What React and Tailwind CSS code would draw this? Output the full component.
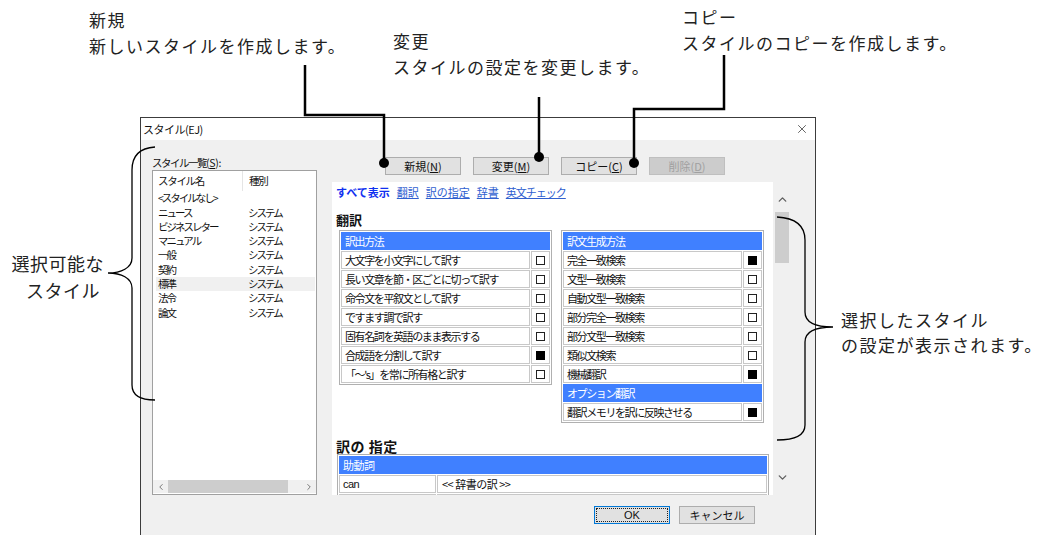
import React from 'react';
import { X, ChevronUp, ChevronDown, ChevronLeft, ChevronRight } from 'lucide-react';

const styles = [
    ['<スタイルなし>', ''],
    ['ニュース', 'システム'],
    ['ビジネスレター', 'システム'],
    ['マニュアル', 'システム'],
    ['一般', 'システム'],
    ['契約', 'システム'],
    ['標準', 'システム'],
    ['法令', 'システム'],
    ['論文', 'システム'],
];

const leftRows = [
    ['大文字を小文字にして訳す', false],
    ['長い文章を節・区ごとに切って訳す', false],
    ['命令文を平叙文として訳す', false],
    ['ですます調で訳す', false],
    ['固有名詞を英語のまま表示する', false],
    ['合成語を分割して訳す', true],
    ['「～\'s」を常に所有格と訳す', false],
];

const rightRows = [
    ['完全一致検索', true],
    ['文型一致検索', false],
    ['自動文型一致検索', false],
    ['部分完全一致検索', false],
    ['部分文型一致検索', false],
    ['類似文検索', false],
    ['機械翻訳', true],
];

const Check = ({ on }) =>
    on ? (
        <span className="inline-block w-[9px] h-[9px] bg-black" />
    ) : (
        <span className="inline-block w-[9px] h-[9px] border border-[#222] bg-white" />
    );

const HeaderRow = ({ label }) => (
    <tr>
        <td colSpan={2} className="p-0 border border-[#4080ff] bg-[#4080ff]">
            <div className="h-[16px] leading-[16px] pl-[3px] text-white">{label}</div>
        </td>
    </tr>
);

const CheckRow = ({ label, on }) => (
    <tr>
        <td className="p-0 border border-[#c8c8c8]">
            <div className="h-[16px] leading-[16px] pl-[3px] whitespace-nowrap">{label}</div>
        </td>
        <td className="p-0 w-[19px] border border-[#c8c8c8]">
            <div className="h-[16px] flex items-center justify-center">
                <Check on={on} />
            </div>
        </td>
    </tr>
);

const Btn = ({ children, disabled }) => (
    <div
        className={`w-[76px] h-[18px] border flex items-center justify-center text-[11px] ${disabled ? 'bg-[#cccccc] border-[#bfbfbf] text-[#a0a0a0]' : 'bg-[#e1e1e1] border-[#adadad] text-[#111]'
            }`}
    >
        {children}
    </div>
);

const App = () => {
    return (
        <div className="relative w-[1042px] h-[535px] overflow-hidden bg-white text-[#111] font-['Noto_Sans_CJK_JP','Noto_Sans',sans-serif]">
            {/* callout labels */}
            <div className="absolute left-[89px] top-[7px] whitespace-nowrap text-[17px] leading-[26px] tracking-[1.5px] text-[#222]">
                <p>新規</p>
                <p>新しいスタイルを作成します。</p>
            </div>
            <div className="absolute left-[393px] top-[28px] whitespace-nowrap text-[17px] leading-[26px] tracking-[1.5px] text-[#222]">
                <p>変更</p>
                <p>スタイルの設定を変更します。</p>
            </div>
            <div className="absolute left-[682px] top-[4px] whitespace-nowrap text-[17px] leading-[26px] tracking-[1.5px] text-[#222]">
                <p>コピー</p>
                <p>スタイルのコピーを作成します。</p>
            </div>
            <div className="absolute right-[938px] top-[250px] whitespace-nowrap text-[18px] leading-[27px] tracking-[0.5px] text-right text-[#222]">
                <p>選択可能な</p>
                <p className="pr-[4px]">スタイル</p>
            </div>
            <div className="absolute left-[841px] top-[307px] whitespace-nowrap text-[17px] leading-[25px] tracking-[1.5px] text-[#222]">
                <p>選択したスタイル</p>
                <p>の設定が表示されます。</p>
            </div>

            {/* dialog */}
            <div className="ml-[140px] mt-[117px] w-[676px] h-[430px] border border-[#3c3c3c] flex flex-col">
                <div className="h-[22px] bg-white flex items-center justify-between pl-[2px] pr-[6px]">
                    <span className="text-[11px] tracking-[-0.5px]">スタイル(EJ)</span>
                    <X size={14} strokeWidth={1.2} className="text-[#222]" />
                </div>
                <div className="flex-1 bg-[#f0f0f0] flex text-[11px]">
                    {/* style list */}
                    <div className="w-[177px] pl-[11px] pt-[15px] flex flex-col">
                        <div className="h-[15px] leading-[15px] text-[10.5px] whitespace-nowrap">
                            <span className="tracking-[-1.5px]">スタイル一覧</span>
                            <span className="tracking-[-0.3px]">(<span className="underline">S</span>):</span>
                        </div>
                        <div className="w-[165px] h-[325px] border border-[#a0a0a0] bg-white flex flex-col">
                            <div className="h-[20px] flex items-stretch text-[10.5px] tracking-[-1.3px]">
                                <div className="w-[90px] pl-[5px] flex items-center border-r border-[#e5e5e5]">スタイル名</div>
                                <div className="pl-[6px] flex items-center">種別</div>
                            </div>
                            {styles.map(([name, kind]) => (
                                <div
                                    key={name}
                                    className={`h-[14.3px] flex items-center text-[10.5px] tracking-[-2px] ${name === '標準' ? 'bg-[#f0f0f0] ml-[3px] mr-[1px]' : ''
                                        }`}
                                >
                                    <div className={`${name === '標準' ? 'w-[92px] pl-[2px]' : 'w-[95px] pl-[5px]'} whitespace-nowrap`}>{name}</div>
                                    <div>{kind}</div>
                                </div>
                            ))}
                            <div className="flex-1" />
                            <div className="h-[13px] mb-[1px] flex items-center bg-[#f0f0f0]">
                                <div className="w-[15px] flex justify-center text-[#606060]">
                                    <ChevronLeft size={10} strokeWidth={2} />
                                </div>
                                <div className="w-[120px] h-full bg-[#cdcdcd]" />
                                <div className="flex-1 flex justify-end pr-[2px] text-[#606060]">
                                    <ChevronRight size={10} strokeWidth={2} />
                                </div>
                            </div>
                        </div>
                    </div>

                    {/* right side */}
                    <div className="flex-1 flex flex-col">
                        <div className="mt-[17px] ml-[67px] flex gap-[12px]">
                            <Btn>新規(<span className="underline">N</span>)</Btn>
                            <Btn>変更(<span className="underline">M</span>)</Btn>
                            <Btn>コピー(<span className="underline">C</span>)</Btn>
                            <Btn disabled>削除(<span className="underline">D</span>)</Btn>
                        </div>
                        <div className="mt-[7px] flex">
                            <div className="ml-[14px] w-[441px] h-[313px] bg-white overflow-hidden flex flex-col">
                                <div className="pt-[2px] pl-[4px] h-[18px] flex items-center gap-[7px] text-[11px]">
                                    <span className="font-bold text-[#1030f0]">すべて表示</span>
                                    <span className="underline text-[#3060d0]">翻訳</span>
                                    <span className="underline text-[#3060d0]">訳の指定</span>
                                    <span className="underline text-[#3060d0]">辞書</span>
                                    <span className="underline text-[#3060d0] tracking-[-1px]">英文チェック</span>
                                </div>
                                <div className="mt-[5px] ml-[4px] mr-[3px] h-[2px] bg-[#d0d0d0]" />
                                <div className="mt-[7px] ml-[4px] h-[16px] leading-[16px] text-[13px] font-bold">翻訳</div>
                                <div className="mt-[2px] flex items-start text-[11px] tracking-[-1.4px]">
                                    <table className="ml-[7px] w-[213px] border border-[#b0b0b0] border-separate border-spacing-[1px]">
                                        <tbody>
                                            <HeaderRow label="訳出方法" />
                                            {leftRows.map(([l, on]) => (
                                                <CheckRow key={l} label={l} on={on} />
                                            ))}
                                        </tbody>
                                    </table>
                                    <table className="ml-[9px] w-[203px] border border-[#b0b0b0] border-separate border-spacing-[1px]">
                                        <tbody>
                                            <HeaderRow label="訳文生成方法" />
                                            {rightRows.map(([l, on]) => (
                                                <CheckRow key={l} label={l} on={on} />
                                            ))}
                                            <HeaderRow label="オプション翻訳" />
                                            <CheckRow label="翻訳メモリを訳に反映させる" on />
                                        </tbody>
                                    </table>
                                </div>
                                <div className="mt-[10px] ml-[4px] mr-[3px] h-[2px] bg-[#d0d0d0]" />
                                <div className="mt-[5px] ml-[4px] h-[16px] leading-[16px] text-[14px] font-bold tracking-[0.5px]">訳の 指定</div>
                                <table className="ml-[5px] w-[432px] border border-[#b0b0b0] border-separate border-spacing-[1px] text-[11px] tracking-[-0.5px]">
                                    <tbody>
                                        <HeaderRow label="助動詞" />
                                        <tr>
                                            <td className="p-0 w-[97px] border border-[#c8c8c8]">
                                                <div className="h-[16px] leading-[16px] pl-[3px] font-['Liberation_Sans',sans-serif]">can</div>
                                            </td>
                                            <td className="p-0 border border-[#c8c8c8]">
                                                <div className="h-[16px] leading-[16px] pl-[4px]">&lt;&lt; 辞書の訳 &gt;&gt;</div>
                                            </td>
                                        </tr>
                                        <tr>
                                            <td className="p-0 w-[97px] border border-[#c8c8c8]">
                                                <div className="h-[16px] leading-[16px] pl-[3px] font-['Liberation_Sans',sans-serif]">could</div>
                                            </td>
                                            <td className="p-0 border border-[#c8c8c8]">
                                                <div className="h-[16px] leading-[16px] pl-[4px]">&lt;&lt; 辞書の訳 &gt;&gt;</div>
                                            </td>
                                        </tr>
                                    </tbody>
                                </table>
                            </div>
                            <div className="ml-[2px] w-[14px] h-[313px] flex flex-col items-center text-[#606060]">
                                <ChevronUp size={13} strokeWidth={2.5} className="mt-[11px]" />
                                <div className="mt-[6px] w-[14px] h-[51px] bg-[#cdcdcd]" />
                                <div className="flex-1" />
                                <ChevronDown size={13} strokeWidth={2.5} className="mb-[11px]" />
                            </div>
                        </div>
                        <div className="mt-[11px] ml-[276px] flex gap-[9px]">
                            <div className="w-[76px] h-[18px] border border-[#0078d7] bg-[#e1e1e1] p-[1px]">
                                <div className="w-full h-full border border-dotted border-[#222] flex items-center justify-center text-[11px] font-['Liberation_Sans',sans-serif]">
                                    OK
                                </div>
                            </div>
                            <Btn>キャンセル</Btn>
                        </div>
                    </div>
                </div>
            </div>

            {/* callout lines and braces */}
            <svg className="absolute inset-0 pointer-events-none" width="1042" height="535" viewBox="0 0 1042 535">
                <g fill="none" stroke="#000" strokeWidth="2.5">
                    <path d="M305 65 V115 H384 V163" />
                    <path d="M539 97 V158" />
                    <path d="M724 55 V109 H634 V163" />
                </g>
                <g fill="#000">
                    <circle cx="384" cy="163" r="5" />
                    <circle cx="539" cy="157" r="5" />
                    <circle cx="634" cy="163" r="5" />
                </g>
                <g fill="none" stroke="#000" strokeWidth="1.3">
                    <path d="M155 147 C140 148 132 155 132 170 V258 C132 268 121 273 108 273 C121 273 132 278 132 288 V385 C132 395 140 400 155 400" />
                    <path d="M777 217 C795 218 805 225 805 240 V312 C805 322 815 327 833 327 C815 327 805 332 805 342 V425 C805 435 795 440 777 440" />
                </g>
            </svg>
        </div>
    );
};

export default App;
